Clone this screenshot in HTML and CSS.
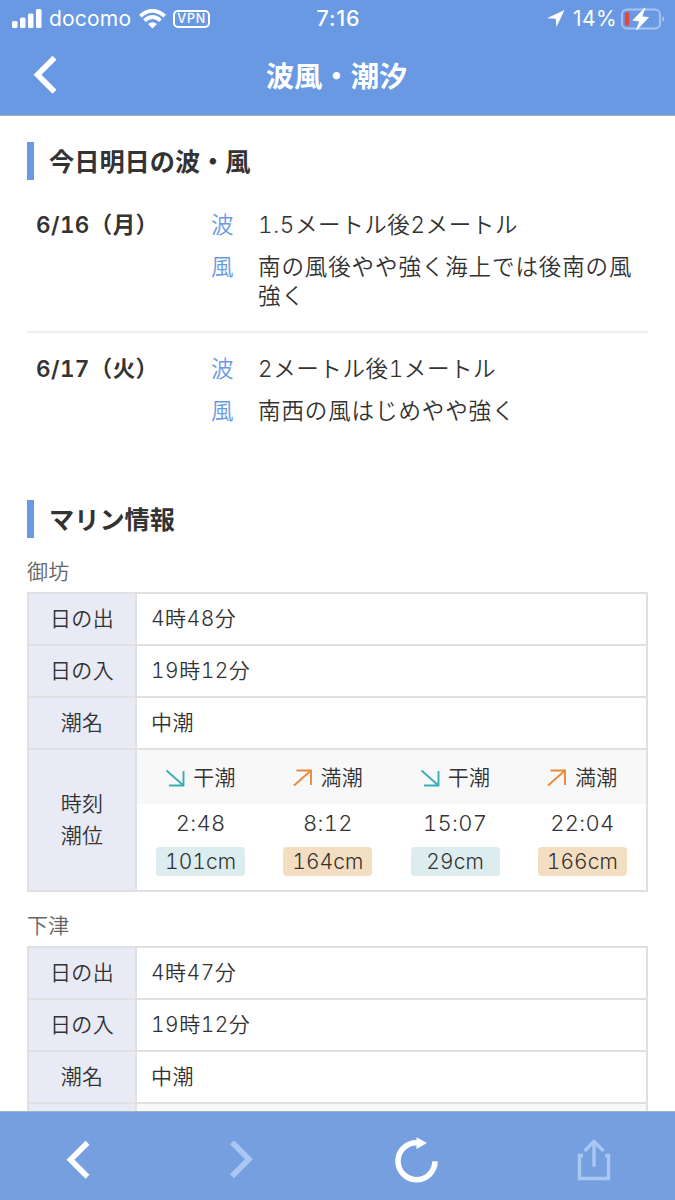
FILE: index.html
```
<!DOCTYPE html>
<html lang="ja">
<head>
  <meta charset="UTF-8" />
  <title>波風・潮汐</title>
  <meta name="viewport" content="width=device-width, initial-scale=1.0" />
  <link rel="stylesheet" href="styles.css">
</head>
<body>

  <header>
    <div class="status">
      <div class="status-left">
        <svg class="signal" width="30" height="19" viewBox="0 0 30 19" fill="#fff">
          <rect x="0" y="12" width="5.5" height="7" rx="1.5" />
          <rect x="8" y="8.500" width="5.500" height="10.500" rx="1.500" />
          <rect x="16" y="4.500" width="5.500" height="14.500" rx="1.500" />
          <rect x="24" y="0" width="5.500" height="19" rx="1.500" />
        </svg>
        <span class="carrier">docomo</span>
        <svg class="wifi" width="27" height="20" viewBox="0 0 27 20">
          <path d="M1.300 7.200Q13.500-3.600 25.700 7.200" fill="none" stroke="#fff" stroke-width="3.800" />
          <path d="M5.400 11.600Q13.500 4.400 21.600 11.600" fill="none" stroke="#fff" stroke-width="3.600" />
          <path d="M9 15.100Q13.500 11.200 18 15.100L13.500 19.600Z" fill="#fff" />
        </svg>
        <span class="vpn">VPN</span>
      </div>
      <div class="clock">7:16</div>
      <div class="status-right">
        <svg class="location" width="18" height="17" viewBox="0 0 18 17">
          <path d="M17.500 0L0 8.200L8.700 8.800L9.500 17Z" fill="#fff" />
        </svg>
        <span class="percent">14%</span>
        <svg class="battery" width="44" height="24" viewBox="0 0 44 24">
          <rect x="1" y="2.500" width="38" height="19" rx="5" fill="none" stroke="#a9c6f2" stroke-width="1.800" />
          <path d="M41.300 9Q43.300 10 43.300 12Q43.300 14 41.300 15Z" fill="#a9c6f2" />
          <rect x="3.800" y="5.300" width="4.500" height="13.400" rx="1.500" fill="#e5483e" />
          <path d="M24 .8L12 13.300L18.700 14L15.500 23L27.500 10.500L20.800 9.800Z" fill="#fff" stroke="#fff" stroke-width=".8" stroke-linejoin="round" />
        </svg>
      </div>
    </div>
    <div class="navbar">
      <svg class="back" width="24" height="38" viewBox="0 0 24 38">
        <path d="M21.500 1.700L4.500 18.700L21.500 35.700" fill="none" stroke="#fff" stroke-width="5.600" />
      </svg>
      <h1>波風・潮汐</h1>
    </div>
  </header>

  <main>
    <h2>今日明日の波・風</h2>

    <div class="forecast">
      <div class="day">6/16（月）</div>
      <dl>
        <dt>波</dt><dd class="wave">1.5メートル後2メートル</dd>
        <dt>風</dt><dd>南の風後やや強く海上では後南の風強く</dd>
      </dl>
    </div>
    <div class="forecast">
      <div class="day">6/17（火）</div>
      <dl>
        <dt>波</dt><dd class="wave">2メートル後1メートル</dd>
        <dt>風</dt><dd>南西の風はじめやや強く</dd>
      </dl>
    </div>

    <h2 class="marine">マリン情報</h2>

    <h3>御坊</h3>
    <div class="table">
      <div class="th">日の出</div><div class="td">4時48分</div>
      <div class="th">日の入</div><div class="td">19時12分</div>
      <div class="th">潮名</div><div class="td">中潮</div>
      <div class="th tide-th">時刻<br>潮位</div>
      <div class="tides">
        <div class="tide low">
          <div class="tide-name"><svg width="20" height="18" viewBox="0 0 20 18"><path d="M1.500 1.500L18.500 16.500M18.500 2V16.500H4" /></svg><span>干潮</span></div>
          <div class="time">2:48</div>
          <div class="level">101cm</div>
        </div>
        <div class="tide high">
          <div class="tide-name"><svg width="20" height="18" viewBox="0 0 20 18"><path d="M1 16.500L18 1.500M3.500 1.500H18V16" /></svg><span>満潮</span></div>
          <div class="time">8:12</div>
          <div class="level">164cm</div>
        </div>
        <div class="tide low">
          <div class="tide-name"><svg width="20" height="18" viewBox="0 0 20 18"><path d="M1.500 1.500L18.500 16.500M18.500 2V16.500H4" /></svg><span>干潮</span></div>
          <div class="time">15:07</div>
          <div class="level">29cm</div>
        </div>
        <div class="tide high">
          <div class="tide-name"><svg width="20" height="18" viewBox="0 0 20 18"><path d="M1 16.500L18 1.500M3.500 1.500H18V16" /></svg><span>満潮</span></div>
          <div class="time">22:04</div>
          <div class="level">166cm</div>
        </div>
      </div>
    </div>

    <h3>下津</h3>
    <div class="table">
      <div class="th">日の出</div><div class="td">4時47分</div>
      <div class="th">日の入</div><div class="td">19時12分</div>
      <div class="th">潮名</div><div class="td">中潮</div>
      <div class="th tide-th"></div>
      <div class="tides">
        <div class="tide-name"></div>
        <div class="tide-name"></div>
        <div class="tide-name"></div>
        <div class="tide-name"></div>
      </div>
    </div>
  </main>

  <footer>
    <svg class="prev" width="24" height="38" viewBox="0 0 24 38">
      <path d="M21.500 1.700L4.500 18.700L21.500 35.700" fill="none" stroke="#fff" stroke-width="5.600" />
    </svg>
    <svg class="next" width="24" height="38" viewBox="0 0 24 38">
      <path d="M2 1.200L19 18.200L2 35.200" fill="none" stroke="#aac7f2" stroke-width="5.600" />
    </svg>
    <svg class="reload" width="44" height="46" viewBox="0 0 44 46">
      <path d="M40 24.300A18.500 18.500 0 1 1 22 5.700" fill="none" stroke="#fff" stroke-width="5.600" />
      <path d="M21.500 .2L32 6L21.500 12Z" fill="#fff" />
    </svg>
    <svg class="share" width="34" height="43" viewBox="0 0 34 43" fill="none" stroke="#aac7f2" stroke-width="3.400">
      <path d="M6 16.500H2.500V39.500H31.500V16.500H28" />
      <path d="M17 27.500V2.500M7.500 12L17 2.500L26.500 12" />
    </svg>
  </footer>

</body>
</html>
```

FILE: styles.css
```
* {
  box-sizing: border-box;
}

body {
  display: flex;
  flex-direction: column;
  height: 1200px;
  margin: 0;
  overflow: hidden;
  background: #fff;
  color: #333;
  font-family: Inter, "Noto Sans CJK JP", sans-serif;
  font-size: 21px;
  font-weight: 350;
  letter-spacing: 0.3px;
}

svg {
  display: block;
  flex: none;
}

header {
  flex: none;
  height: 116px;
  background: #6999e2;
  border-bottom: 1px solid #a9b0bf;
  color: #fff;
}

/* ステータスバー */
.status {
  display: grid;
  grid-template-columns: 1fr auto 1fr;
  height: 36px;
  padding: 0 10px 0 12px;
  line-height: 36px;
}

.status-left,
.status-right {
  display: flex;
  align-items: center;
}

.status-right {
  justify-content: flex-end;
}

.carrier {
  margin: 1px 8px 0 7px;
  font-size: 21px;
  font-weight: 400;
  letter-spacing: 0.2px;
}

.vpn {
  width: 37px;
  height: 18px;
  margin-left: 7px;
  border: 2px solid #fff;
  border-radius: 5px;
  font-size: 12.5px;
  font-weight: 500;
  line-height: 14px;
  letter-spacing: 0.8px;
  text-align: center;
}

.clock {
  font-size: 21.5px;
  font-weight: 500;
  letter-spacing: 0.9px;
}

.percent {
  margin: 1px 4px 0 8px;
  font-size: 21px;
  font-weight: 400;
  letter-spacing: 0.4px;
}

.navbar {
  display: grid;
  grid-template-columns: 1fr auto 1fr;
  align-items: center;
  height: 79px;
  padding: 0 33px;
}

.back {
  margin-top: -2px;
}

h1 {
  margin: 0 2px 2px 0;
  font-size: 28.3px;
  font-weight: bold;
  letter-spacing: 0;
}

main {
  flex: 1;
  min-height: 0;
  padding: 26px 27px 0;
  overflow: hidden;
  font-variant-numeric: tabular-nums;
}

h2 {
  height: 38px;
  margin: 0 0 23px;
  padding-left: 15px;
  border-left: 7px solid #6999e2;
  font-size: 25.2px;
  font-weight: bold;
  line-height: 40px;
  letter-spacing: 0;
}

/* 波・風 */
.forecast {
  display: grid;
  grid-template-columns: 175px 1fr;
  padding: 7px 9px 8px;
  font-size: 22.5px;
  line-height: 29px;
}

.forecast + .forecast {
  margin-top: 13px;
  padding-top: 21px;
  border-top: 2px solid #eee;
}

.day {
  font-weight: 600;
  letter-spacing: 0.4px;
}

dl {
  display: grid;
  grid-template-columns: 47px 1fr;
  row-gap: 13px;
  margin: 0;
}

dt {
  color: #6999e2;
}

dd {
  margin: 0;
  letter-spacing: 0.9px;
}

.wave {
  letter-spacing: 0.6px;
}

.marine {
  margin: 67px 0 16px;
}

h3 {
  margin: 0 0 3px;
  padding-top: 1px;
  color: #666;
  font-size: 21px;
  font-weight: 350;
  line-height: 34px;
}

/* マリン情報 */
.table {
  display: grid;
  grid-template-columns: 106px 1fr;
  gap: 2px;
  margin-bottom: 16px;
  padding: 2px;
  background: #e0e0e2;
}

.th,
.td {
  height: 50px;
  line-height: 50px;
}

.th {
  background: #e8eaf5;
  text-align: center;
}

.td {
  padding-left: 14px;
  background: #fff;
  letter-spacing: 0.5px;
}

.tide-th {
  display: flex;
  align-items: center;
  justify-content: center;
  height: 140px;
  line-height: 32px;
}

.tides {
  display: grid;
  grid-template-columns: repeat(4, 1fr);
  height: 140px;
  background: #fff;
}

.tide {
  text-align: center;
}

.tide-name {
  display: flex;
  align-items: center;
  justify-content: center;
  gap: 8px;
  height: 54px;
  padding-bottom: 2px;
  background: #f8f8f8;
}

.tide-name svg {
  margin-top: 3px;
  fill: none;
  stroke-width: 1.9px;
}

.low svg {
  stroke: #39adb8;
}

.high svg {
  stroke: #e9893c;
}

.time {
  height: 43px;
  font-size: 22px;
  line-height: 39px;
}

.level {
  width: 89px;
  height: 29px;
  margin: 0 auto;
  border-radius: 4px;
  line-height: 29px;
  letter-spacing: 0.1px;
}

.low .level {
  background: #dcecef;
}

.high .level {
  background: #f4dec1;
}

/* 下部ツールバー */
footer {
  display: flex;
  flex: none;
  align-items: center;
  justify-content: space-between;
  height: 89px;
  padding: 8px 64px 0 66px;
  background: #769fdf;
  border-top: 1px solid #a3b0c6;
}

.reload {
  margin: 0 -2px 0 2px;
}
```
